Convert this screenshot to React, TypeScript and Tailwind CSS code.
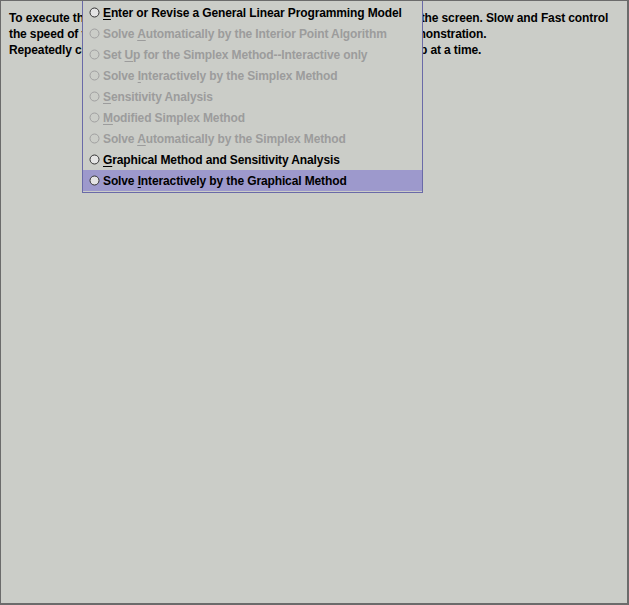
const items: { pre: string; key: string; post: string; enabled: boolean; selected?: boolean }[] = [
  { pre: "", key: "E", post: "nter or Revise a General Linear Programming Model", enabled: true },
  { pre: "Solve ", key: "A", post: "utomatically by the Interior Point Algorithm", enabled: false },
  { pre: "Set ", key: "U", post: "p for the Simplex Method--Interactive only", enabled: false },
  { pre: "Solve ", key: "I", post: "nteractively by the Simplex Method", enabled: false },
  { pre: "", key: "S", post: "ensitivity Analysis", enabled: false },
  { pre: "", key: "M", post: "odified Simplex Method", enabled: false },
  { pre: "Solve ", key: "A", post: "utomatically by the Simplex Method", enabled: false },
  { pre: "", key: "G", post: "raphical Method and Sensitivity Analysis", enabled: true },
  { pre: "Solve ", key: "I", post: "nteractively by the Graphical Method", enabled: true, selected: true },
];

function Radio({ enabled }: { enabled: boolean }) {
  return (
    <svg width="11" height="11" viewBox="0 0 11 11" className="shrink-0">
      <circle
        cx="5.5"
        cy="5.5"
        r="4.5"
        fill={enabled ? "#e4e4e4" : "none"}
        stroke={enabled ? "#333333" : "#a0a0a0"}
        strokeWidth="1"
      />
    </svg>
  );
}

export default function App() {
  return (
    <div className="relative w-[629px] h-[605px] bg-[#cbcdc8] border-t border-l border-[#6b6b6b] border-r-2 border-b-2 overflow-hidden font-['Liberation_Sans',Arial,sans-serif] text-[12px] tracking-[-0.12px] font-bold text-black">
      <div className="pl-[8px] pt-[9px] leading-[16px] whitespace-nowrap">
        <div>To execute this demonstration, click on the Demo button at the bottom of the screen. Slow and Fast control</div>
        <div>the speed of the demo, while the Pause temporarily stops the running demonstration.</div>
        <div>Repeatedly clicking on the Next button advances the demo ahead one step at a time.</div>
      </div>

      <div className="absolute left-[81px] top-[-1px] w-[341px] bg-[#cbcdc8] border border-[#6a6aa8] py-px">
        {items.map((it, i) => (
          <div
            key={i}
            className={`flex items-center h-[21px] pl-[6px] gap-[3px] ${it.selected ? "bg-[#9d99cc]" : ""} ${it.enabled ? "text-black" : "text-[#9c9c9c]"}`}
          >
            <Radio enabled={it.enabled} />
            <span className="whitespace-nowrap">
              {it.pre}
              <span className="underline underline-offset-2">{it.key}</span>
              {it.post}
            </span>
          </div>
        ))}
      </div>
    </div>
  );
}
